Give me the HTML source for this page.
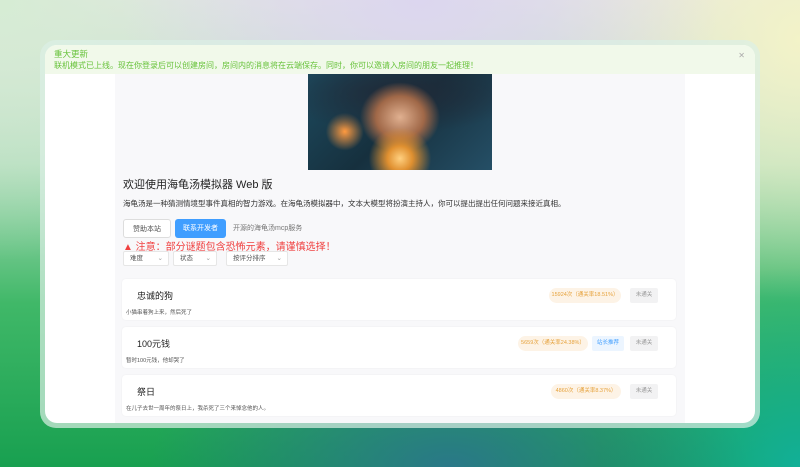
<!DOCTYPE html>
<html><head><meta charset="utf-8"><style>
*{margin:0;padding:0;box-sizing:border-box}
body{width:800px;height:467px;overflow:hidden;position:relative;font-family:"Liberation Sans","Noto Sans CJK SC",sans-serif;
background:
radial-gradient(ellipse 300px 150px at 450px 467px,#2a7888 0%,rgba(42,120,136,0) 100%),
radial-gradient(ellipse 200px 200px at 800px 467px,#12b098 0%,rgba(18,176,152,0) 100%),
radial-gradient(ellipse 300px 200px at 420px 0px,#dcd6ef 0%,rgba(220,214,239,0) 100%),
radial-gradient(ellipse 260px 260px at 800px 40px,#f3f3c8 0%,rgba(243,243,200,0) 100%),
radial-gradient(ellipse 300px 260px at 0px 0px,#d6ecd4 0%,rgba(214,236,212,0) 100%),
linear-gradient(180deg,#e2e4e2 0%,#b0dcbc 35%,#40b868 65%,#18a050 100%);}
.frame{position:absolute;left:40px;top:40px;width:720px;height:388px;border-radius:16px;background:rgba(220,240,230,0.7)}
.win{position:absolute;left:45px;top:45px;width:710px;height:378px;border-radius:12px;background:#fff;overflow:hidden}
.notice{position:absolute;left:0;top:0;width:710px;height:29px;background:#f1f9ea;padding:4px 9px;color:#67c23a;font-size:8px;line-height:11px}
.notice .t{font-size:8.5px}
.notice .x{position:absolute;right:10px;top:5px;color:#aaa;font-size:8px}
.col{position:absolute;left:70px;top:29px;width:570px;height:349px;background:#f8f8fa}
.img{position:absolute;left:193px;top:0;width:184px;height:96px;background:
radial-gradient(circle at 50% 88%,#ffd080 0%,#e09030 10%,rgba(0,0,0,0) 25%),
radial-gradient(ellipse 40px 35px at 50% 45%,#e0b090 0%,#a06848 60%,rgba(0,0,0,0) 100%),
radial-gradient(ellipse 120px 40px at 50% 20%,#202a38 0%,rgba(0,0,0,0) 100%),
radial-gradient(circle at 20% 60%,#ff9a40 0%,rgba(0,0,0,0) 12%),
linear-gradient(135deg,#1d4a5e,#16303e 50%,#254f66)}
h1{position:absolute;left:8px;top:102px;font-size:11px;font-weight:normal;color:#222}
.desc{position:absolute;left:8px;top:124px;font-size:7.5px;color:#333}
.btn{position:absolute;top:145px;height:19px;font-size:7px;line-height:19px;text-align:center;border-radius:3px}
.warn{position:absolute;left:8px;top:164px;color:#f04040;font-size:10px}
.sel{position:absolute;top:177px;height:15px;border:1px solid #e6e6e6;background:#fff;font-size:6.5px;line-height:13px;color:#555;padding-left:6px;border-radius:2px}
.sel span{position:absolute;right:5px;color:#999}
.card{position:absolute;left:7px;width:554px;height:41px;background:#fff;border-radius:4px;box-shadow:0 0 2px rgba(0,0,0,0.05)}
.card .n{position:absolute;left:15px;top:10px;font-size:9px;color:#222}
.card .d{position:absolute;left:4px;top:29px;font-size:5.5px;color:#555}
.tag{position:absolute;top:9px;height:15px;line-height:15px;font-size:5.5px;border-radius:8px;background:#fdf3e6;color:#e6a23c;text-align:center}
.g{position:absolute;right:18px;top:9px;width:28px;height:15px;line-height:15px;font-size:5.5px;background:#f2f2f3;color:#999;text-align:center;border-radius:2px}
.b{position:absolute;top:9px;width:32px;height:15px;line-height:15px;font-size:5.5px;background:#ecf5ff;color:#409eff;text-align:center;border-radius:2px}
</style></head><body>
<div class="frame"></div>
<div class="win">
<div class="col">
<div class="img"></div>
<h1>欢迎使用海龟汤模拟器 Web 版</h1>
<div class="desc">海龟汤是一种猜测情境型事件真相的智力游戏。在海龟汤模拟器中，文本大模型将扮演主持人，你可以提出提出任何问题来接近真相。</div>
<div class="btn" style="left:8px;width:48px;border:1px solid #ddd;background:#fff;color:#555">赞助本站</div>
<div class="btn" style="left:60px;width:51px;background:#409eff;color:#fff">联系开发者</div>
<div class="btn" style="left:118px;color:#777">开源的海龟汤mcp服务</div>
<div class="warn">▲ 注意：部分谜题包含恐怖元素，请谨慎选择！</div>
<div class="sel" style="left:8px;width:46px">难度<span>⌄</span></div>
<div class="sel" style="left:58px;width:44px">状态<span>⌄</span></div>
<div class="sel" style="left:111px;width:62px">按评分排序<span>⌄</span></div>
<div class="card" style="top:205px"><div class="n">忠诚的狗</div><div class="d">小猫串着狗上来，然后死了</div><div class="tag" style="right:55px;width:72px">15924次（通关率18.51%）</div><div class="g">未通关</div></div>
<div class="card" style="top:253px"><div class="n">100元钱</div><div class="d">暂时100元钱，他却哭了</div><div class="tag" style="right:88px;width:70px">5659次（通关率24.38%）</div><div class="b" style="right:52px">站长推荐</div><div class="g">未通关</div></div>
<div class="card" style="top:301px"><div class="n">祭日</div><div class="d">在儿子去世一周年的祭日上，我杀死了三个来悼念他的人。</div><div class="tag" style="right:55px;width:70px">4860次（通关率8.37%）</div><div class="g">未通关</div></div>
</div>
<div class="notice"><div class="t">重大更新</div>联机模式已上线。现在你登录后可以创建房间，房间内的消息将在云端保存。同时，你可以邀请入房间的朋友一起推理！<span class="x">✕</span></div>
</div>
</body></html>
